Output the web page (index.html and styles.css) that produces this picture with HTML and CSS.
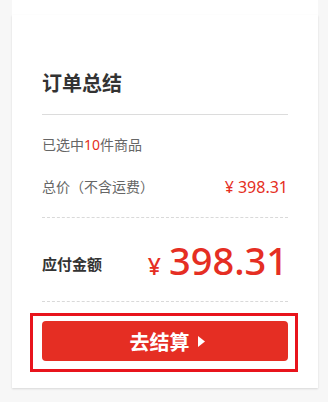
FILE: index.html
```html
<!DOCTYPE html>
<html lang="zh-CN">
<head>
<meta charset="utf-8">
<title>订单总结</title>
<link rel="stylesheet" href="styles.css">
</head>
<body>
<div class="card-top"></div>
<div class="card">
  <h2 class="title">订单总结</h2>
  <div class="row row-count">已选中<span class="red">10</span>件商品</div>
  <div class="row row-sub">
    <span>总价（不含运费）</span>
    <span class="red sub-price">¥ 398.31</span>
  </div>
  <div class="total">
    <span class="total-label">应付金额</span>
    <span class="total-price"><span class="yen">¥</span>398.31</span>
  </div>
  <div class="btn-wrap">
    <button class="btn">去结算<svg class="caret" width="7" height="11" viewBox="0 0 7 11"><path d="M0 0 L7 5.5 L0 11 Z" fill="#fff"/></svg></button>
    <div class="highlight"></div>
  </div>
</div>
</body>
</html>
```
FILE: styles.css
```css
html, body {
  margin: 0;
  padding: 0;
}
body {
  background: #f7f7f7;
  font-family: "Noto Sans", "Noto Sans CJK SC", sans-serif;
  color: #333;
  width: 328px;
  height: 402px;
  overflow: hidden;
}
.card-top {
  width: 306px;
  height: 15px;
  margin-left: 12px;
  background: #fff;
}
.card {
  width: 306px;
  margin-left: 12px;
  box-sizing: border-box;
  background: #fff;
  padding: 55px 30px 27px;
  box-shadow: 0 1px 2px rgba(0, 0, 0, 0.13);
}
.title {
  margin: 0;
  font-size: 20px;
  line-height: 28px;
  font-weight: 700;
  color: #333;
  padding-bottom: 16px;
  border-bottom: 1px solid #dcdcdc;
}
.row {
  font-size: 14px;
  line-height: 20px;
  color: #666;
}
.row-count {
  margin-top: 20px;
}
.row-sub {
  margin-top: 22px;
  display: flex;
  justify-content: space-between;
  align-items: center;
  padding-bottom: 20px;
  border-bottom: 1px dashed #d9d9d9;
}
.red {
  color: #e52e23;
}
.sub-price {
  font-size: 16px;
}
.total {
  display: flex;
  justify-content: space-between;
  align-items: center;
  margin-top: 23px;
  height: 44px;
  padding-bottom: 16px;
  border-bottom: 1px dashed #d9d9d9;
}
.total-label {
  font-size: 15px;
  font-weight: 700;
  color: #333;
}
.total-price {
  color: #e52e23;
  font-size: 38px;
  line-height: 44px;
  font-weight: 500;
}
.yen {
  font-size: 23px;
  margin-right: 8px;
}
.btn-wrap {
  position: relative;
  margin-top: 19px;
}
.btn {
  display: flex;
  align-items: center;
  justify-content: center;
  width: 100%;
  height: 40px;
  border: 0;
  border-radius: 4px;
  background: #e52e23;
  color: #fff;
  font-family: "Noto Sans CJK SC", sans-serif;
  font-size: 20px;
  font-weight: 700;
  padding: 0 0 0 4px;
}
.caret {
  margin-left: 8px;
}
.highlight {
  position: absolute;
  top: -8px;
  left: -12px;
  right: -10px;
  bottom: -11px;
  border: 3px solid #e8141c;
  pointer-events: none;
}
```
